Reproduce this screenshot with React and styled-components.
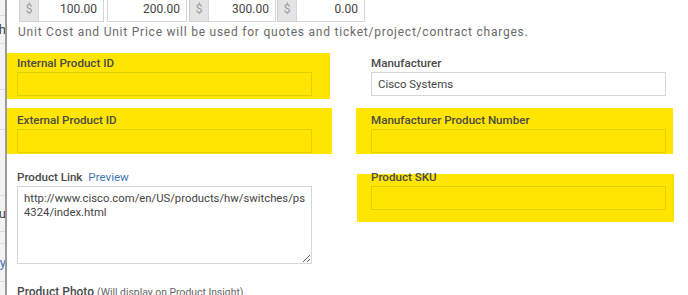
import React from 'react'
import styled, { createGlobalStyle } from 'styled-components'

const GlobalStyle = createGlobalStyle`
  html, body {
    margin: 0;
    padding: 0;
    background: #ffffff;
    overflow: hidden;
  }
  body {
    font-family: Roboto, "Liberation Sans", Arial, sans-serif;
    color: #444;
  }
`

const prices = [
    { value: '100.00', addon: true, width: 85 },
    { value: '200.00', addon: false, width: 80, gap: 3 },
    { value: '300.00', addon: true, width: 87, gap: 2 },
    { value: '0.00', addon: true, width: 88, gap: 1 },
]

// rows of the list peeking out from behind the dialog
const sideRows = [
    { h: 16 },
    { h: 28, text: 'th' },
    { h: 46 },
    { h: 40 },
    { h: 66 },
    { h: 36, text: 'u' },
    { h: 12 },
    { h: 38, text: 'ly', link: true },
]

function App() {
  return (
    <Page>
        <GlobalStyle />
        <Sidebar>
            {sideRows.map((r, i) => (
                <SideRow key={i} h={r.h} link={r.link}>
                    {r.text && <span>{r.text}</span>}
                </SideRow>
            ))}
        </Sidebar>
        <Divider />

        <Content>
            <PriceRow>
                {prices.map((p) => (
                    <PriceGroup key={p.value} w={p.width} gap={p.gap}>
                        {p.addon && <Addon>$</Addon>}
                        <PriceInput>{p.value}</PriceInput>
                    </PriceGroup>
                ))}
            </PriceRow>
            <Help>
                Unit Cost and Unit Price will be used for quotes and ticket/project/contract charges.
            </Help>

            <Grid>
                <Field mark={{ top: -3, right: -18, bottom: -3, left: -10 }}>
                    <Label>Internal Product ID</Label>
                    <TextBox marked />
                </Field>
                <Field>
                    <Label>Manufacturer</Label>
                    <TextBox>Cisco Systems</TextBox>
                </Field>

                <Field mark={{ top: -5, right: -20, bottom: -1, left: -10 }}>
                    <Label>External Product ID</Label>
                    <TextBox marked />
                </Field>
                <Field mark={{ top: -5, right: -7, bottom: -1, left: -15 }}>
                    <Label>Manufacturer Product Number</Label>
                    <TextBox marked />
                </Field>

                <Field>
                    <Label>
                        Product Link <LinkText>Preview</LinkText>
                    </Label>
                    <Area
                        readOnly
                        wrap="off"
                        defaultValue={'http://www.cisco.com/en/US/products/hw/switches/ps\n4324/index.html'}
                    />
                </Field>
                <Field mark={{ top: 4, right: -8, bottom: -12, left: -14 }}>
                    <Label>Product SKU</Label>
                    <TextBox marked />
                </Field>
            </Grid>

            <PhotoLabel>
                Product Photo <Note>(Will display on Product Insight)</Note>
            </PhotoLabel>
        </Content>
    </Page>
  )
}

const Page = styled.div`
    display: flex;
    width: 688px;
    height: 295px;
    overflow: hidden;
`

const Sidebar = styled.div`
    width: 5px;
    flex-shrink: 0;
    background: #f3f3f3;
    overflow: hidden;
    display: flex;
    flex-direction: column;
`

const SideRow = styled.div`
    height: ${(p) => p.h}px;
    flex-shrink: 0;
    box-sizing: border-box;
    border-bottom: 1px solid #dcdcdc;
    display: flex;
    align-items: center;
    justify-content: flex-end;
    font-size: 13px;
    color: ${(p) => (p.link ? '#3b72b4' : '#444')};

    span {
        white-space: nowrap;
        margin-right: -1px;
    }
`

const Divider = styled.div`
    width: 2px;
    flex-shrink: 0;
    background: #9b9b9b;
`

const Content = styled.div`
    flex: 1;
    padding-left: 10px;
    position: relative;
    isolation: isolate;
`

const PriceRow = styled.div`
    display: flex;
    margin-top: -4px;
    padding-left: 2px;
`

const PriceGroup = styled.div`
    display: flex;
    width: ${(p) => p.w}px;
    margin-left: ${(p) => p.gap || 0}px;
    height: 26px;
`

const Addon = styled.div`
    width: 19px;
    flex-shrink: 0;
    display: flex;
    align-items: center;
    justify-content: center;
    background: #e4e4e4;
    border: 1px solid #d0d0d0;
    border-right: none;
    box-sizing: border-box;
    color: #9a9a9a;
    font-size: 12px;
`

const PriceInput = styled.div`
    flex: 1;
    box-sizing: border-box;
    border: 1px solid #d6d6d6;
    display: flex;
    align-items: center;
    justify-content: flex-end;
    padding-right: 6px;
    font-size: 12px;
    color: #444;
`

const Help = styled.div`
    font-size: 12px;
    letter-spacing: 0.77px;
    color: #6a6a6a;
    line-height: 14px;
    margin-top: 3px;
    padding-left: 1px;
    white-space: nowrap;
`

const Grid = styled.div`
    display: grid;
    grid-template-columns: 295px 295px;
    column-gap: 59px;
    row-gap: 17px;
    margin-top: 17px;
    align-items: start;
`

const Field = styled.div`
    position: relative;

    &::before {
        content: '';
        display: ${(p) => (p.mark ? 'block' : 'none')};
        position: absolute;
        z-index: -1;
        background: #ffe500;
        top: ${(p) => (p.mark ? p.mark.top : 0)}px;
        right: ${(p) => (p.mark ? p.mark.right : 0)}px;
        bottom: ${(p) => (p.mark ? p.mark.bottom : 0)}px;
        left: ${(p) => (p.mark ? p.mark.left : 0)}px;
    }
`

const Label = styled.div`
    font-size: 11.6px;
    font-weight: 500;
    line-height: 14px;
    color: #4a4a4a;
    margin-bottom: 2px;
`

const LinkText = styled.span`
    font-weight: 400;
    color: #3f77b3;
    margin-left: 3px;
`

const TextBox = styled.div`
    height: 24px;
    box-sizing: border-box;
    border: 1px solid ${(p) => (p.marked ? '#ddd100' : '#d6d6d6')};
    background: ${(p) => (p.marked ? 'transparent' : '#fff')};
    display: flex;
    align-items: center;
    padding-left: 6px;
    font-size: 11.4px;
    color: #444;
`

const Area = styled.textarea`
    display: block;
    width: 295px;
    height: 78px;
    box-sizing: border-box;
    border: 1px solid #d6d6d6;
    border-radius: 0;
    padding: 5px 6px;
    margin: 0;
    font-family: Roboto, "Liberation Sans", Arial, sans-serif;
    font-size: 11.3px;
    line-height: 14px;
    color: #444;
    resize: both;
    outline: none;
    overflow: hidden;
`

const PhotoLabel = styled.div`
    font-size: 12px;
    font-weight: 500;
    line-height: 14px;
    color: #4a4a4a;
    margin-top: 21px;
    white-space: nowrap;
`

const Note = styled.span`
    font-weight: 400;
    font-size: 10.4px;
    color: #666;
`

export default App
